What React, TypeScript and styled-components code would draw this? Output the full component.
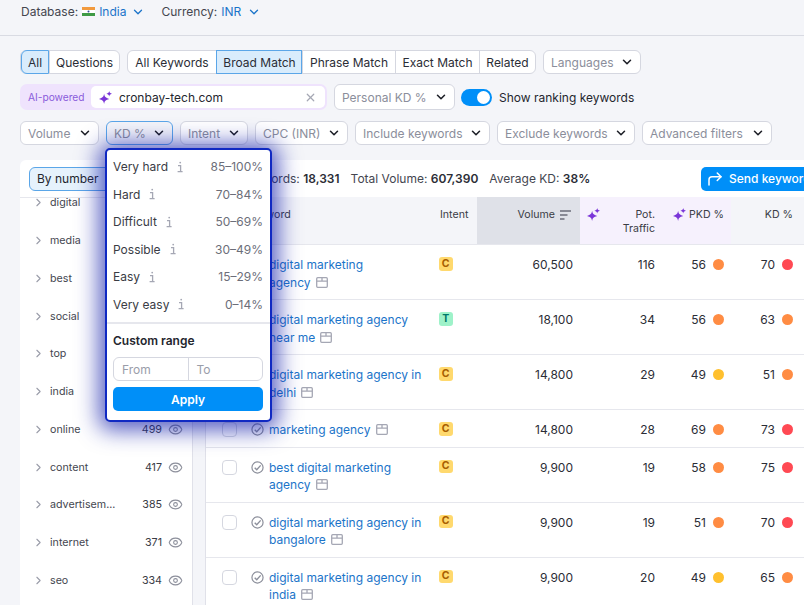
import * as React from "react";
import styled, { createGlobalStyle } from "styled-components";
import { ChevronDown, ChevronRight, CornerUpRight, Eye, X } from "lucide-react";

const GlobalStyle = createGlobalStyle`
  html, body {
    margin: 0;
    padding: 0;
    background: #f4f5f9;
  }
  * {
    box-sizing: border-box;
  }
`;

const Page = styled.div`
  position: relative;
  width: 804px;
  height: 605px;
  overflow: hidden;
  background: #f4f5f9;
  color: #24262e;
  font-family: Inter, "Liberation Sans", sans-serif;
  font-size: 12px;
`;

const TopBar = styled.div`
  height: 36px;
  padding: 0 0 12px 21px;
  display: flex;
  align-items: center;
  gap: 16px;
  border-bottom: 1px solid #d9dbe3;
  color: #44464f;
`;

const TopItem = styled.div`
  display: flex;
  align-items: center;
  gap: 4px;
`;

const TopValue = styled.span`
  color: #1b74c9;
`;

const Toolbar = styled.div`
  display: flex;
  align-items: center;
  gap: 7px;
  padding-left: 20px;
  margin-top: ${props => props.$top}px;
`;

const Segmented = styled.div`
  display: flex;
  height: 24px;
  background: #fff;
  border: 1px solid #d5d7e0;
  border-radius: 6px;
`;

const Segment = styled.div`
  display: flex;
  align-items: center;
  justify-content: center;
  width: ${props => props.$w}px;
  margin: -1px 0;
  color: #2b2d36;
  border-left: 1px solid #d5d7e0;
  &:first-child {
    border-left: none;
    border-radius: 6px 0 0 6px;
  }
  &:last-child {
    border-radius: 0 6px 6px 0;
  }
  ${props =>
    props.$active &&
    `
    background: #d9ecfc;
    outline: 1px solid #5ba6e8;
    outline-offset: -1px;
  `}
`;

const Select = styled.div`
  display: flex;
  align-items: center;
  justify-content: space-between;
  flex: none;
  width: ${props => props.$w}px;
  height: ${props => props.$h ?? 24}px;
  padding: 0 6px 0 7px;
  background: #fff;
  color: #8b8e9b;
  white-space: nowrap;
  border: 1px solid ${props => (props.$open ? "#5ba6e8" : "#d5d7e0")};
  border-radius: 6px;
  ${props => props.$open && "background: #f4f5f9;"}
`;

const AiBox = styled.div`
  display: flex;
  align-items: center;
  flex: none;
  width: 307px;
  height: 26px;
  padding: 2px 2px 2px 8px;
  background: #efe3fd;
  border-radius: 7px;
`;

const AiLabel = styled.span`
  width: 63px;
  flex: none;
  color: #8a5cdb;
  font-size: 10.2px;
  white-space: nowrap;
`;

const AiInput = styled.div`
  flex: 1;
  height: 22px;
  display: flex;
  align-items: center;
  gap: 7px;
  padding: 0 8px 0 8px;
  background: #fff;
  border-radius: 5px;
  color: #24262e;
`;

const AiText = styled.span`
  flex: 1;
`;

const Toggle = styled.div`
  position: relative;
  width: 31px;
  height: 17px;
  margin-left: -1px;
  border-radius: 9px;
  background: #008ff8;
  &::after {
    content: "";
    position: absolute;
    top: 2px;
    right: 2px;
    width: 13px;
    height: 13px;
    border-radius: 50%;
    background: #fff;
  }
`;

const Card = styled.div`
  width: 880px;
  margin: 15px 0 0 20px;
  background: #fff;
  border-radius: 6px 0 0 0;
`;

const CardTop = styled.div`
  height: 37px;
  display: flex;
  align-items: center;
  padding-left: 9px;
`;

const ModeButton = styled.div`
  width: 100px;
  height: 24px;
  display: flex;
  align-items: center;
  padding-left: 7px;
  background: #e6f2fc;
  border: 1px solid #5ba6e8;
  border-radius: 6px;
`;

const Stats = styled.div`
  display: flex;
  gap: 11px;
  flex: none;
  width: 478px;
  margin-left: 94px;
  color: #44464f;
`;

const StatValue = styled.b`
  font-weight: 600;
  color: #2b2d36;
`;

const SendButton = styled.div`
  width: 170px;
  height: 24px;
  display: flex;
  align-items: center;
  gap: 5px;
  padding-left: 5px;
  background: #008ff8;
  color: #fff;
  font-weight: 500;
  border-radius: 5px;
`;

const CardBody = styled.div`
  display: flex;
  height: 408px;
  background: #f4f5f9;
`;

const Sidebar = styled.div`
  width: 173px;
  flex: none;
  overflow: hidden;
  background: #fff;
  border-top: 1px solid #e6e7ed;
  border-right: 1px solid #e0e1e9;
`;

const SideList = styled.div`
  margin-top: -14px;
`;

const SideRow = styled.div`
  height: 37.75px;
  display: flex;
  align-items: center;
  padding: 0 9px 0 12px;
  font-size: 10.7px;
  color: #44464f;
`;

const SideWord = styled.span`
  flex: 1;
  margin-left: 5px;
`;

const SideCount = styled.span`
  margin-right: 6px;
  color: #3a3c45;
`;

const Table = styled.div`
  width: 675px;
  flex: none;
  margin-left: 12px;
  background: #fff;
  border-left: 1px solid #e0e1e9;
`;

const columns = "224px 47px 103px 82px 69px 73px";

const HeadRow = styled.div`
  display: grid;
  grid-template-columns: ${columns};
  height: 48px;
  background: #f4f5f9;
  border-bottom: 1px solid #e6e7ed;
  font-size: 10.6px;
  line-height: 14px;
  color: #3a3c45;
`;

const HeadCell = styled.div`
  display: flex;
  justify-content: ${props => (props.$left ? "flex-start" : "flex-end")};
  align-items: flex-start;
  gap: ${props => props.$gap ?? 4}px;
  padding: 11px ${props => props.$right ?? 0}px 0 ${props => props.$pad ?? 0}px;
  background: ${props => props.$bg ?? "transparent"};
  text-align: right;
`;

const Row = styled.div`
  display: grid;
  grid-template-columns: ${columns};
  padding: 11px 0 8px;
  border-bottom: 1px solid #e6e7ed;
  line-height: 17.5px;
`;

const KeywordCell = styled.div`
  display: flex;
  align-items: flex-start;
  padding-left: 16px;
`;

const Checkbox = styled.div`
  width: 15px;
  height: 15px;
  flex: none;
  margin: 1px 14px 0 0;
  background: #fff;
  border: 1px solid #d5d7e0;
  border-radius: 4px;
`;

const KeywordLink = styled.div`
  width: 154px;
  margin-left: 5px;
  color: #1b74c9;
`;

const NoWrap = styled.span`
  white-space: nowrap;
`;

const IntentCell = styled.div`
  padding: 1px 0 0 9px;
`;

const Badge = styled.div`
  width: 13.5px;
  height: 13.5px;
  display: flex;
  align-items: center;
  justify-content: center;
  border-radius: 3px;
  font-size: 10.5px;
  font-weight: 700;
  line-height: 1;
  background: ${props => (props.$kind === "T" ? "#9ef2c9" : "#ffd96e")};
  color: ${props => (props.$kind === "T" ? "#00786a" : "#a85e00")};
`;

const NumCell = styled.div`
  text-align: right;
  padding-right: 7px;
  color: #2b2d36;
`;

const ScoreCell = styled.div`
  display: flex;
  justify-content: flex-end;
  align-items: center;
  gap: 7px;
  height: 17.5px;
  padding-right: ${props => props.$right}px;
  color: #2b2d36;
`;

const Dot = styled.span`
  width: 11px;
  height: 11px;
  border-radius: 50%;
  background: ${props => props.$color};
`;

const Popover = styled.div`
  position: absolute;
  left: 105px;
  top: 148px;
  width: 167px;
  height: 274px;
  background: #fff;
  border: 2px solid #1029c2;
  border-radius: 5px;
  box-shadow: 0 2px 22px 6px rgba(20, 30, 170, 0.72);
  padding-top: 3px;
`;

const LevelRow = styled.div`
  height: 27.5px;
  display: flex;
  align-items: center;
  padding: 0 7px 0 6px;
  color: #3a3c45;
`;

const LevelRange = styled.span`
  margin-left: auto;
  color: #6c6e79;
`;

const InfoIcon = styled.svg`
  width: 8px;
  height: 12px;
  margin-left: 8px;
  color: #a5a7b4;
`;

const CustomBlock = styled.div`
  margin-top: 4px;
  padding: 9px 7px 0 6px;
  border-top: 2px solid #e6e7ed;
`;

const CustomTitle = styled.div`
  font-size: 12px;
  font-weight: 600;
  color: #24262e;
  line-height: 16px;
`;

const RangeFields = styled.div`
  display: flex;
  height: 24px;
  margin-top: 8px;
  border: 1px solid #d5d7e0;
  border-radius: 6px;
`;

const RangeField = styled.div`
  flex: 1;
  display: flex;
  align-items: center;
  padding-left: 8px;
  color: #9a9da9;
  & + & {
    border-left: 1px solid #d5d7e0;
  }
`;

const ApplyButton = styled.div`
  height: 24px;
  margin-top: 6px;
  display: flex;
  align-items: center;
  justify-content: center;
  background: #008ff8;
  color: #fff;
  font-weight: 600;
  border-radius: 5px;
`;

const SparkleSlot = styled.span`
  margin-left: 7px;
`;

const PotHead = styled(HeadCell)`
  justify-content: space-between;
`;

const Sparkle = ({ size = 13 }: { size?: number }) => (
  <svg width={size} height={size} viewBox="0 0 14 14" fill="#7a35d8" style={{ flex: "none" }}>
    <path d="M5.5 3C6.1 6.4 7.1 7.4 11 8.5 7.1 9.6 6.1 10.6 5.5 14 4.9 10.6 3.9 9.6 0 8.5 3.9 7.4 4.9 6.4 5.5 3Z" />
    <path d="M11 0c.3 1.8.9 2.4 3 3-2.1.6-2.7 1.2-3 3-.3-1.8-.9-2.4-3-3 2.1-.6 2.7-1.2 3-3Z" />
  </svg>
);

const Flag = () => (
  <svg width="13" height="9" viewBox="0 0 13 9">
    <rect width="13" height="3" fill="#f29a3e" />
    <rect y="3" width="13" height="3" fill="#fff" />
    <rect y="6" width="13" height="3" fill="#3f9a45" />
    <circle cx="6.5" cy="4.5" r="1" fill="#3a4a9a" />
  </svg>
);

const PageIcon = () => (
  <svg width="12" height="11" viewBox="0 0 12 11" fill="none" stroke="#a5a7b4" strokeWidth="1.3" style={{ marginLeft: 5, verticalAlign: -1 }}>
    <rect x=".7" y=".7" width="10.6" height="9.6" rx="1" />
    <path d="M.7 4.2h10.6M6 .7v3.5" />
  </svg>
);

const CheckedCircle = () => (
  <svg width="13" height="13" viewBox="0 0 14 14" fill="none" stroke="#8c8f9b" strokeWidth="1.3" style={{ flex: "none", marginTop: 2 }}>
    <circle cx="7" cy="7" r="6" />
    <path d="M4 7.2l2.2 2.3 4.2-4.8" strokeWidth="1.5" />
  </svg>
);

const SortIcon = () => (
  <svg width="11" height="10" viewBox="0 0 11 10" stroke="#6c6e79" strokeWidth="1.3" style={{ marginLeft: 1, marginTop: 2 }}>
    <path d="M0 1h11M0 5h7.5M0 9h4.5" />
  </svg>
);

const Info = () => (
  <InfoIcon viewBox="0 0 8 12" fill="none" stroke="currentColor" strokeWidth="1.3">
    <path d="M2 4.6h2.6v6M1.6 10.6h5" />
    <circle cx="4.2" cy="1.6" r=".9" fill="currentColor" stroke="none" />
  </InfoIcon>
);

const Chevron = () => <ChevronDown size={14} strokeWidth={2.6} color="#1d1f27" />;

const levels = [
  ["Very hard", "85–100%"],
  ["Hard", "70–84%"],
  ["Difficult", "50–69%"],
  ["Possible", "30–49%"],
  ["Easy", "15–29%"],
  ["Very easy", "0–14%"],
];

const sideWords = [
  ["digital", ""],
  ["media", ""],
  ["best", ""],
  ["social", ""],
  ["top", ""],
  ["india", ""],
  ["online", "499"],
  ["content", "417"],
  ["advertisem...", "385"],
  ["internet", "371"],
  ["seo", "334"],
];

const ORANGE = "#ff8c43";
const RED = "#ff4953";
const YELLOW = "#ffc02e";

const rows = [
  { text: "digital marketing", last: "agency", intent: "C", volume: "60,500", pot: "116", pkd: "56", pkdColor: ORANGE, kd: "70", kdColor: RED },
  { text: "digital marketing agency", last: "near me", intent: "T", volume: "18,100", pot: "34", pkd: "56", pkdColor: ORANGE, kd: "63", kdColor: ORANGE },
  { text: "digital marketing agency in", last: "delhi", intent: "C", volume: "14,800", pot: "29", pkd: "49", pkdColor: YELLOW, kd: "51", kdColor: ORANGE },
  { text: "marketing", last: "agency", intent: "C", volume: "14,800", pot: "28", pkd: "69", pkdColor: ORANGE, kd: "73", kdColor: RED },
  { text: "best digital marketing", last: "agency", intent: "C", volume: "9,900", pot: "19", pkd: "58", pkdColor: ORANGE, kd: "75", kdColor: RED },
  { text: "digital marketing agency in", last: "bangalore", intent: "C", volume: "9,900", pot: "19", pkd: "51", pkdColor: ORANGE, kd: "70", kdColor: RED },
  { text: "digital marketing agency in", last: "india", intent: "C", volume: "9,900", pot: "20", pkd: "49", pkdColor: YELLOW, kd: "65", kdColor: ORANGE },
];

const App = () => {
  return (
    <Page>
      <GlobalStyle />
      <TopBar>
        <TopItem>
          Database: <Flag /> <TopValue>India</TopValue>
          <ChevronDown size={14} strokeWidth={2.2} color="#1b74c9" style={{ marginLeft: 1 }} />
        </TopItem>
        <TopItem>
          Currency: <TopValue>INR</TopValue>
          <ChevronDown size={14} strokeWidth={2.2} color="#1b74c9" style={{ marginLeft: 2 }} />
        </TopItem>
      </TopBar>

      <Toolbar $top={14}>
        <Segmented>
          <Segment $w={28} $active>All</Segment>
          <Segment $w={70}>Questions</Segment>
        </Segmented>
        <Segmented>
          <Segment $w={88}>All Keywords</Segment>
          <Segment $w={86} $active>Broad Match</Segment>
          <Segment $w={93}>Phrase Match</Segment>
          <Segment $w={84}>Exact Match</Segment>
          <Segment $w={56}>Related</Segment>
        </Segmented>
        <Select $w={98}>Languages <Chevron /></Select>
      </Toolbar>

      <Toolbar $top={10}>
        <AiBox>
          <AiLabel>AI-powered</AiLabel>
          <AiInput>
            <Sparkle />
            <AiText>cronbay-tech.com</AiText>
            <X size={13} strokeWidth={2.2} color="#a5a7b4" />
          </AiInput>
        </AiBox>
        <Select $w={121} $h={26}>Personal KD % <Chevron /></Select>
        <Toggle />
        <span>Show ranking keywords</span>
      </Toolbar>

      <Toolbar $top={11}>
        <Select $w={79}>Volume <Chevron /></Select>
        <Select $w={67} $open>KD % <Chevron /></Select>
        <Select $w={68}>Intent <Chevron /></Select>
        <Select $w={93}>CPC (INR) <Chevron /></Select>
        <Select $w={135}>Include keywords <Chevron /></Select>
        <Select $w={138}>Exclude keywords <Chevron /></Select>
        <Select $w={130}>Advanced filters <Chevron /></Select>
      </Toolbar>

      <Card>
        <CardTop>
          <ModeButton>By number</ModeButton>
          <Stats>
            <span>All Keywords: <StatValue>18,331</StatValue></span>
            <span>Total Volume: <StatValue>607,390</StatValue></span>
            <span>Average KD: <StatValue>38%</StatValue></span>
          </Stats>
          <SendButton>
            <CornerUpRight size={18} strokeWidth={2} />
            Send keywords
          </SendButton>
        </CardTop>

        <CardBody>
          <Sidebar>
            <SideList>
              {sideWords.map(([word, count]) => (
                <SideRow key={word}>
                  <ChevronRight size={13} strokeWidth={2} color="#9a9da9" />
                  <SideWord>{word}</SideWord>
                  <SideCount>{count}</SideCount>
                  <Eye size={15} strokeWidth={1.7} color="#8c8f9b" />
                </SideRow>
              ))}
            </SideList>
          </Sidebar>

          <Table>
            <HeadRow>
              <HeadCell $left $pad={41}>Keyword</HeadCell>
              <HeadCell $left $pad={10}>Intent</HeadCell>
              <HeadCell $bg="#dfe1e8" $right={9}>Volume <SortIcon /></HeadCell>
              <PotHead $bg="#f6f1fd" $right={7}>
                <SparkleSlot><Sparkle /></SparkleSlot>
                <span>Pot.<br />Traffic</span>
              </PotHead>
              <HeadCell $bg="#f6f1fd" $right={7} $gap={3}><Sparkle /> PKD %</HeadCell>
              <HeadCell $right={11}>KD %</HeadCell>
            </HeadRow>
            {rows.map(row => (
              <Row key={row.text + row.last}>
                <KeywordCell>
                  <Checkbox />
                  <CheckedCircle />
                  <KeywordLink>
                    {row.text} <NoWrap>{row.last}<PageIcon /></NoWrap>
                  </KeywordLink>
                </KeywordCell>
                <IntentCell><Badge $kind={row.intent}>{row.intent}</Badge></IntentCell>
                <NumCell>{row.volume}</NumCell>
                <NumCell>{row.pot}</NumCell>
                <ScoreCell $right={7}>{row.pkd}<Dot $color={row.pkdColor} /></ScoreCell>
                <ScoreCell $right={11}>{row.kd}<Dot $color={row.kdColor} /></ScoreCell>
              </Row>
            ))}
          </Table>
        </CardBody>
      </Card>

      <Popover>
        {levels.map(([label, range]) => (
          <LevelRow key={label}>
            {label}
            <Info />
            <LevelRange>{range}</LevelRange>
          </LevelRow>
        ))}
        <CustomBlock>
          <CustomTitle>Custom range</CustomTitle>
          <RangeFields>
            <RangeField>From</RangeField>
            <RangeField>To</RangeField>
          </RangeFields>
          <ApplyButton>Apply</ApplyButton>
        </CustomBlock>
      </Popover>
    </Page>
  );
};

export default App;
